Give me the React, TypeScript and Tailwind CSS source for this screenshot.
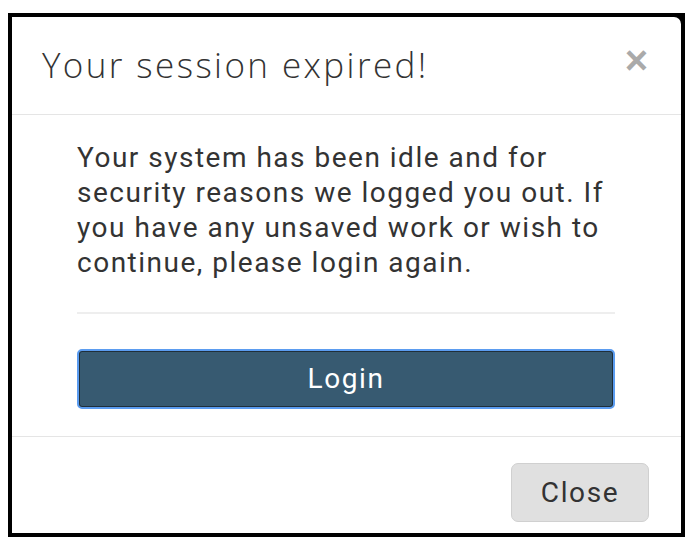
import React from "react";

export default function App() {
  return (
    <div className="w-[700px] h-[547px] bg-white overflow-hidden pt-[13px] pl-[8px]">
      <div className="w-[677px] h-[524px] bg-black p-[4px]">
        <div className="w-full h-full bg-white rounded-tr-[7px] flex flex-col">
          {/* Header */}
          <div className="h-[98px] border-b border-[#e5e5e5] flex items-start justify-between pl-[30px] pr-[33px] pt-[25px]">
            <h1
              className="text-[35px] leading-[46px] font-light text-[#333] tracking-[2.4px]"
              style={{ fontFamily: '"Open Sans", sans-serif' }}
            >
              Your session expired!
            </h1>
            <span
              className="text-[40px] leading-[40px] font-bold text-[#aaa] -mt-[2px]"
              style={{ fontFamily: '"Liberation Sans", Arial, sans-serif' }}
            >
              ×
            </span>
          </div>
          {/* Body */}
          <div
            className="h-[322px] border-b border-[#e5e5e5] pl-[65px] pr-[66px] pt-[25px]"
            style={{ fontFamily: 'Roboto, "Liberation Sans", sans-serif' }}
          >
            <p className="text-[28px] leading-[35px] text-[#333] tracking-[1.5px]">
              Your system has been idle and for security reasons we logged you out. If you have any unsaved work or wish to continue, please login again.
            </p>
            <div className="mt-[32px] h-[2px] bg-[#eeeeee]" />
            <button className="mt-[35px] w-full h-[60px] rounded-[5px] bg-[#375a71] border-2 border-[#5b9cf0] shadow-[inset_0_0_0_1px_#1f2f3a] text-white text-[28px] tracking-[1.6px]">
              Login
            </button>
          </div>
          {/* Footer */}
          <div
            className="flex-1 flex justify-end items-start pt-[26px] pr-[32px]"
            style={{ fontFamily: 'Roboto, "Liberation Sans", sans-serif' }}
          >
            <button className="w-[138px] h-[59px] rounded-[7px] bg-[#e0e0e0] border border-[#d0d0d0] text-[#333] text-[28px] tracking-[1.6px]">
              Close
            </button>
          </div>
        </div>
      </div>
    </div>
  );
}
